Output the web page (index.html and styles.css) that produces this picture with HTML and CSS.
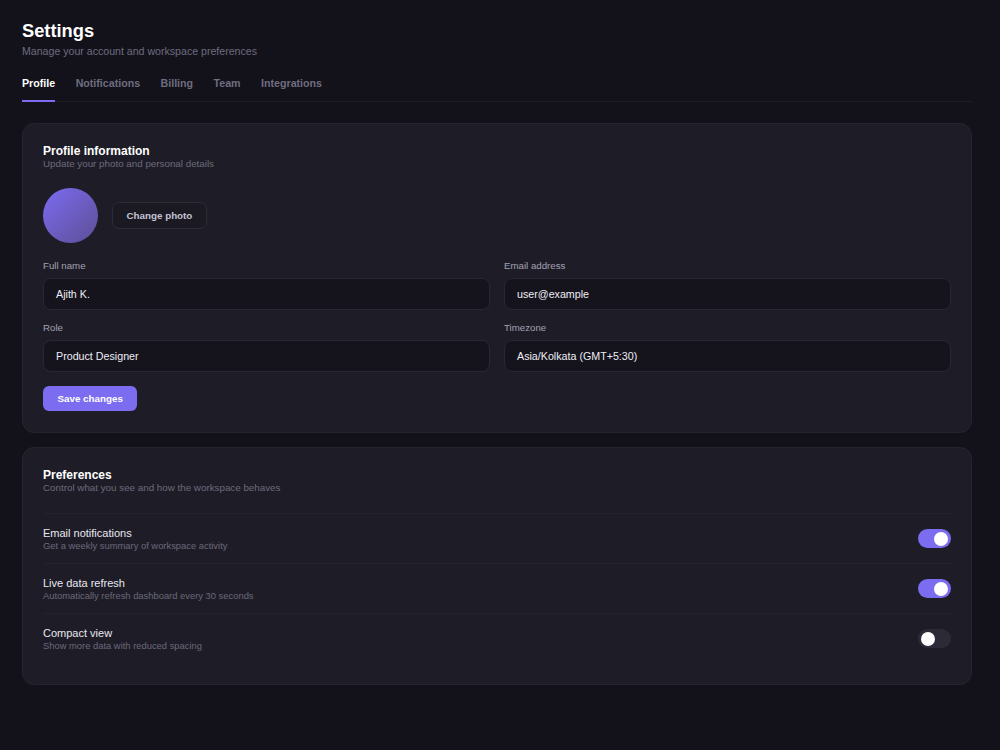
FILE: index.html
```html
<!DOCTYPE html>
<html lang="en">
<head>
    <meta charset="UTF-8">
    <meta name="viewport" content="width=device-width, initial-scale=1.0">
    <title>Settings</title>
    <link rel="stylesheet" href="styles.css">
</head>
<body>

<div class="page">
    <div class="header">
        <h1 class="title">Settings</h1>
        <div class="subtitle">Manage your account and workspace preferences</div>
    </div>

    <div class="tabs">
        <div class="tab active">Profile</div>
        <div class="tab">Notifications</div>
        <div class="tab">Billing</div>
        <div class="tab">Team</div>
        <div class="tab">Integrations</div>
    </div>

    <div class="card">
        <div class="card-title">Profile information</div>
        <div class="card-sub">Update your photo and personal details</div>

        <div class="photo-row">
            <div class="avatar"></div>
            <button class="btn-ghost">Change photo</button>
        </div>

        <div class="form-grid">
            <div class="field">
                <label>Full name</label>
                <div class="input">Ajith K.</div>
            </div>
            <div class="field">
                <label>Email address</label>
                <div class="input">user@example</div>
            </div>
            <div class="field">
                <label>Role</label>
                <div class="input">Product Designer</div>
            </div>
            <div class="field">
                <label>Timezone</label>
                <div class="input">Asia/Kolkata (GMT+5:30)</div>
            </div>
        </div>

        <button class="btn-primary">Save changes</button>
    </div>

    <div class="card prefs">
        <div class="card-title">Preferences</div>
        <div class="card-sub">Control what you see and how the workspace behaves</div>

        <div class="pref-list">
            <div class="pref">
                <div>
                    <div class="pref-name">Email notifications</div>
                    <div class="pref-desc">Get a weekly summary of workspace activity</div>
                </div>
                <div class="toggle on"><span class="knob"></span></div>
            </div>
            <div class="pref">
                <div>
                    <div class="pref-name">Live data refresh</div>
                    <div class="pref-desc">Automatically refresh dashboard every 30 seconds</div>
                </div>
                <div class="toggle on"><span class="knob"></span></div>
            </div>
            <div class="pref">
                <div>
                    <div class="pref-name">Compact view</div>
                    <div class="pref-desc">Show more data with reduced spacing</div>
                </div>
                <div class="toggle"><span class="knob"></span></div>
            </div>
        </div>
    </div>
</div>

</body>
</html>
```

FILE: styles.css
```css
body{
    margin: 0;
    background-color: #13121a;
    font-family: "Liberation Sans", Arial, sans-serif;
    color: #f1f0f5;
}
.page{
    padding: 20px 28px 40px 22px;
}
.title{
    margin: 0;
    font-size: 18.3px;
    font-weight: bold;
    line-height: 22px;
    color: #ffffff;
}
.subtitle{
    margin-top: 3px;
    font-size: 10.6px;
    line-height: 13px;
    color: #6e6c80;
}

.tabs{
    display: flex;
    gap: 20.5px;
    margin-top: 11px;
    border-bottom: 1px solid #1f1e28;
}
.tab{
    padding: 8px 0 10px 0;
    font-size: 10.65px;
    line-height: 13px;
    font-weight: bold;
    color: #6f6d80;
    border-bottom: 2px solid transparent;
    margin-bottom: -1px;
}
.tab.active{
    color: #ffffff;
    border-bottom-color: #7b6cf0;
}

.card{
    margin-top: 21px;
    padding: 21px 20px 21px 20px;
    background-color: #1e1d27;
    border: 1px solid #26252f;
    border-radius: 12px;
}
.prefs{
    margin-top: 14px;
}
.card-title{
    font-size: 12px;
    font-weight: bold;
    color: #ffffff;
    line-height: 13px;
}
.card-sub{
    font-size: 9.8px;
    color: #6c6a7c;
    line-height: 12px;
}

.photo-row{
    display: flex;
    align-items: center;
    gap: 14px;
    margin-top: 18px;
}
.avatar{
    width: 55px;
    height: 55px;
    border-radius: 50%;
    background: linear-gradient(135deg, #7c6cf2, #5d4e95);
}
.btn-ghost{
    height: 27px;
    padding: 0 13.5px;
    background-color: #1b1a23;
    border: 1px solid #2c2b36;
    border-radius: 7px;
    color: #c5c3d2;
    font-family: inherit;
    font-size: 9.8px;
    font-weight: bold;
}

.form-grid{
    display: grid;
    grid-template-columns: 1fr 1fr;
    column-gap: 14px;
    row-gap: 12px;
    margin-top: 17px;
}
.field label{
    display: block;
    font-size: 9.7px;
    line-height: 12px;
    color: #a3a1b2;
    margin-bottom: 6px;
}
.input{
    height: 30px;
    line-height: 30px;
    padding: 0 12px;
    background-color: #15141d;
    border: 1px solid #282733;
    border-radius: 8px;
    font-size: 10.7px;
    color: #eeedf5;
}

.btn-primary{
    margin-top: 14px;
    height: 25px;
    padding: 0 14.5px;
    background-color: #7b6cf0;
    border: none;
    border-radius: 6px;
    color: #ffffff;
    font-family: inherit;
    font-size: 9.8px;
    font-weight: bold;
}

.pref-list{
    margin-top: 19px;
}
.pref{
    display: flex;
    justify-content: space-between;
    align-items: center;
    height: 49px;
    border-top: 1px solid #24232d;
}
.pref-name{
    font-size: 11px;
    color: #e9e8f0;
    line-height: 14px;
}
.pref-desc{
    font-size: 9.4px;
    color: #6a687a;
    line-height: 12px;
}
.toggle{
    display: flex;
    align-items: center;
    width: 33px;
    height: 19px;
    padding: 0 3px;
    box-sizing: border-box;
    border-radius: 10px;
    background-color: #2b2a36;
    justify-content: flex-start;
}
.toggle.on{
    background-color: #7b6cf0;
    justify-content: flex-end;
}
.knob{
    width: 14px;
    height: 14px;
    border-radius: 50%;
    background-color: #ffffff;
}
```
